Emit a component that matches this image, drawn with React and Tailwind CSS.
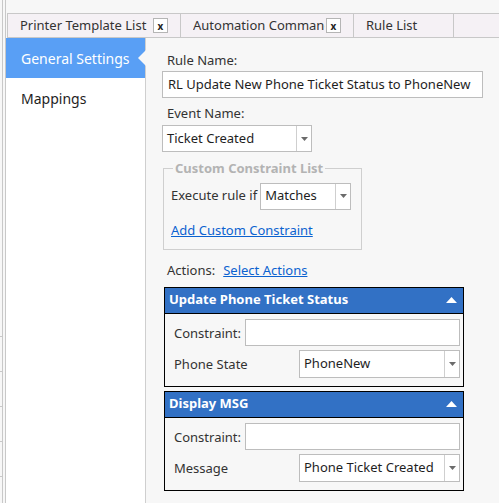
import { useState } from 'react';

const font = { fontFamily: '"Noto Sans", "Open Sans", sans-serif' };

const Caret = () => (
    <svg width="7" height="4" viewBox="0 0 7 4"><path d="M0 0h7L3.5 4z" fill="#6b6b6b" /></svg>
);

const UpCaret = () => (
    <svg width="11" height="6" viewBox="0 0 11 6"><path d="M0 6h11L5.5 0z" fill="#fff" /></svg>
);

const Select = ({ value, className }) => (
    <div className={`flex h-[27px] items-stretch border border-[#bdbdbd] bg-white ${className}`}>
        <div className="flex-1 flex items-center pl-[4px] text-[#1e1e1e] whitespace-nowrap overflow-hidden">{value}</div>
        <div className="w-[15px] border-l border-[#cfcfcf] flex items-center justify-center"><Caret /></div>
    </div>
);

const ActionPanel = ({ title, label, value }) => (
    <div className="w-[300px] border border-black bg-[#f7f7f7]">
        <div className="h-[26px] bg-[#3271c5] border-b border-black flex items-center justify-between pl-[4px] pr-[6px]">
            <span className="text-white font-bold">{title}</span>
            <UpCaret />
        </div>
        <div className="pl-[9px] pr-[3px] pt-[5px] pb-[8px] flex flex-col gap-[4px]">
            <div className="flex items-center">
                <span className="w-[71px] pt-[3px] text-[#333]">Constraint:</span>
                <div className="flex-1 h-[27px] border border-[#bdbdbd] bg-white" />
            </div>
            <div className="flex items-center">
                <span className="w-[125px] pt-[3px] text-[#333]">{label}</span>
                <Select value={value} className="flex-1 h-[28px]" />
            </div>
        </div>
    </div>
);

const Tab = ({ label, closable, width }) => (
    <div className={`flex items-center h-full border-r border-[#c8c8c8] pl-[12px] ${width}`}>
        <span className="flex-1 min-w-0 whitespace-nowrap overflow-hidden text-[#333]">{label}</span>
        {closable && (
            <span className="ml-[1px] mr-[12px] w-[15px] h-[15px] border border-[#b5b5b5] bg-white flex items-center justify-center text-[10px] font-bold leading-none text-[#222] shrink-0">x</span>
        )}
    </div>
);

export default function App() {
    const [active, setActive] = useState('general');

    return (
        <div className="w-[499px] h-[503px] bg-[#f7f7f7] overflow-hidden text-[13px] flex" style={font}>
            {/* left gutter */}
            <div className="w-[6px] h-full flex shrink-0">
                <div className="w-[2px] h-full flex flex-col pt-[336px] gap-[34px]">
                    {[0, 1, 2, 3, 4].map(i => <div key={i} className="h-px bg-[#c8c8c8]" />)}
                </div>
                <div className="w-px h-full bg-[#c8c8c8]" />
                <div className="w-[2px]" />
                <div className="w-px h-full bg-[#c8c8c8]" />
            </div>

            <div className="flex-1 flex flex-col">
                <div className="h-[13px]" />
                <div className="h-[25px] ml-[1px] flex border-t border-l border-b border-[#c8c8c8] bg-[#f5f1f5]">
                    <Tab label="Printer Template List" closable width="w-[173px]" />
                    <Tab label="Automation Command List" closable width="w-[173px]" />
                    <Tab label="Rule List" width="w-[100px]" />
                </div>

                <div className="flex-1 flex">
                    {/* sidebar */}
                    <div className="w-[140px] bg-white border-r border-[#cfcfcf] flex flex-col">
                        <div
                            onClick={() => setActive('general')}
                            className={`relative h-[40px] flex items-center pl-[15px] text-[14px] ${active === 'general' ? 'bg-[#599ff5] text-white' : 'text-[#1e1e1e]'}`}
                        >
                            General Settings
                            {active === 'general' && (
                                <div className="absolute right-[-1px] top-[12px] w-0 h-0 border-y-[8px] border-y-transparent border-r-[8px] border-r-[#f7f7f7]" />
                            )}
                        </div>
                        <div
                            onClick={() => setActive('mappings')}
                            className={`h-[40px] flex items-center pl-[15px] text-[14px] ${active === 'mappings' ? 'bg-[#599ff5] text-white' : 'text-[#1e1e1e]'}`}
                        >
                            Mappings
                        </div>
                    </div>

                    {/* content */}
                    <div className="flex-1 pl-[16px] pt-[12px] flex flex-col">
                        <div className="pl-[5px] text-[#333] leading-[20px]">Rule Name:</div>
                        <div className="w-[321px] h-[27px] mt-[1px] border border-[#bdbdbd] bg-white flex items-center pl-[5px] text-[#1e1e1e] whitespace-nowrap overflow-hidden">
                            RL Update New Phone Ticket Status to PhoneNew
                        </div>
                        <div className="pl-[5px] mt-[5px] text-[#333] leading-[20px]">Event Name:</div>
                        <Select value="Ticket Created" className="w-[150px] mt-[2px] h-[27px]" />

                        <fieldset className="w-[199px] mt-[7px] ml-[1px] border border-[#cfcfcf] pl-[7px] pr-[10px] pb-[9px]">
                            <legend className="ml-[2px] px-[2px] font-bold text-[#b3b3b3]">Custom Constraint List</legend>
                            <div className="flex items-center mt-[4px]">
                                <span className="text-[#333] mr-[3px]">Execute rule if</span>
                                <Select value="Matches" className="flex-1 h-[27px]" />
                            </div>
                            <a href="#" className="block mt-[11px] text-[#0b62d0] underline">Add Custom Constraint</a>
                        </fieldset>

                        <div className="flex gap-[8px] mt-[11px] pl-[5px]">
                            <span className="text-[#333]">Actions:</span>
                            <a href="#" className="text-[#0b62d0] underline">Select Actions</a>
                        </div>

                        <div className="mt-[6px] ml-[2px] flex flex-col gap-[4px]">
                            <ActionPanel title="Update Phone Ticket Status" label="Phone State" value="PhoneNew" />
                            <ActionPanel title="Display MSG" label="Message" value="Phone Ticket Created" />
                        </div>
                    </div>
                </div>
            </div>
        </div>
    );
}
